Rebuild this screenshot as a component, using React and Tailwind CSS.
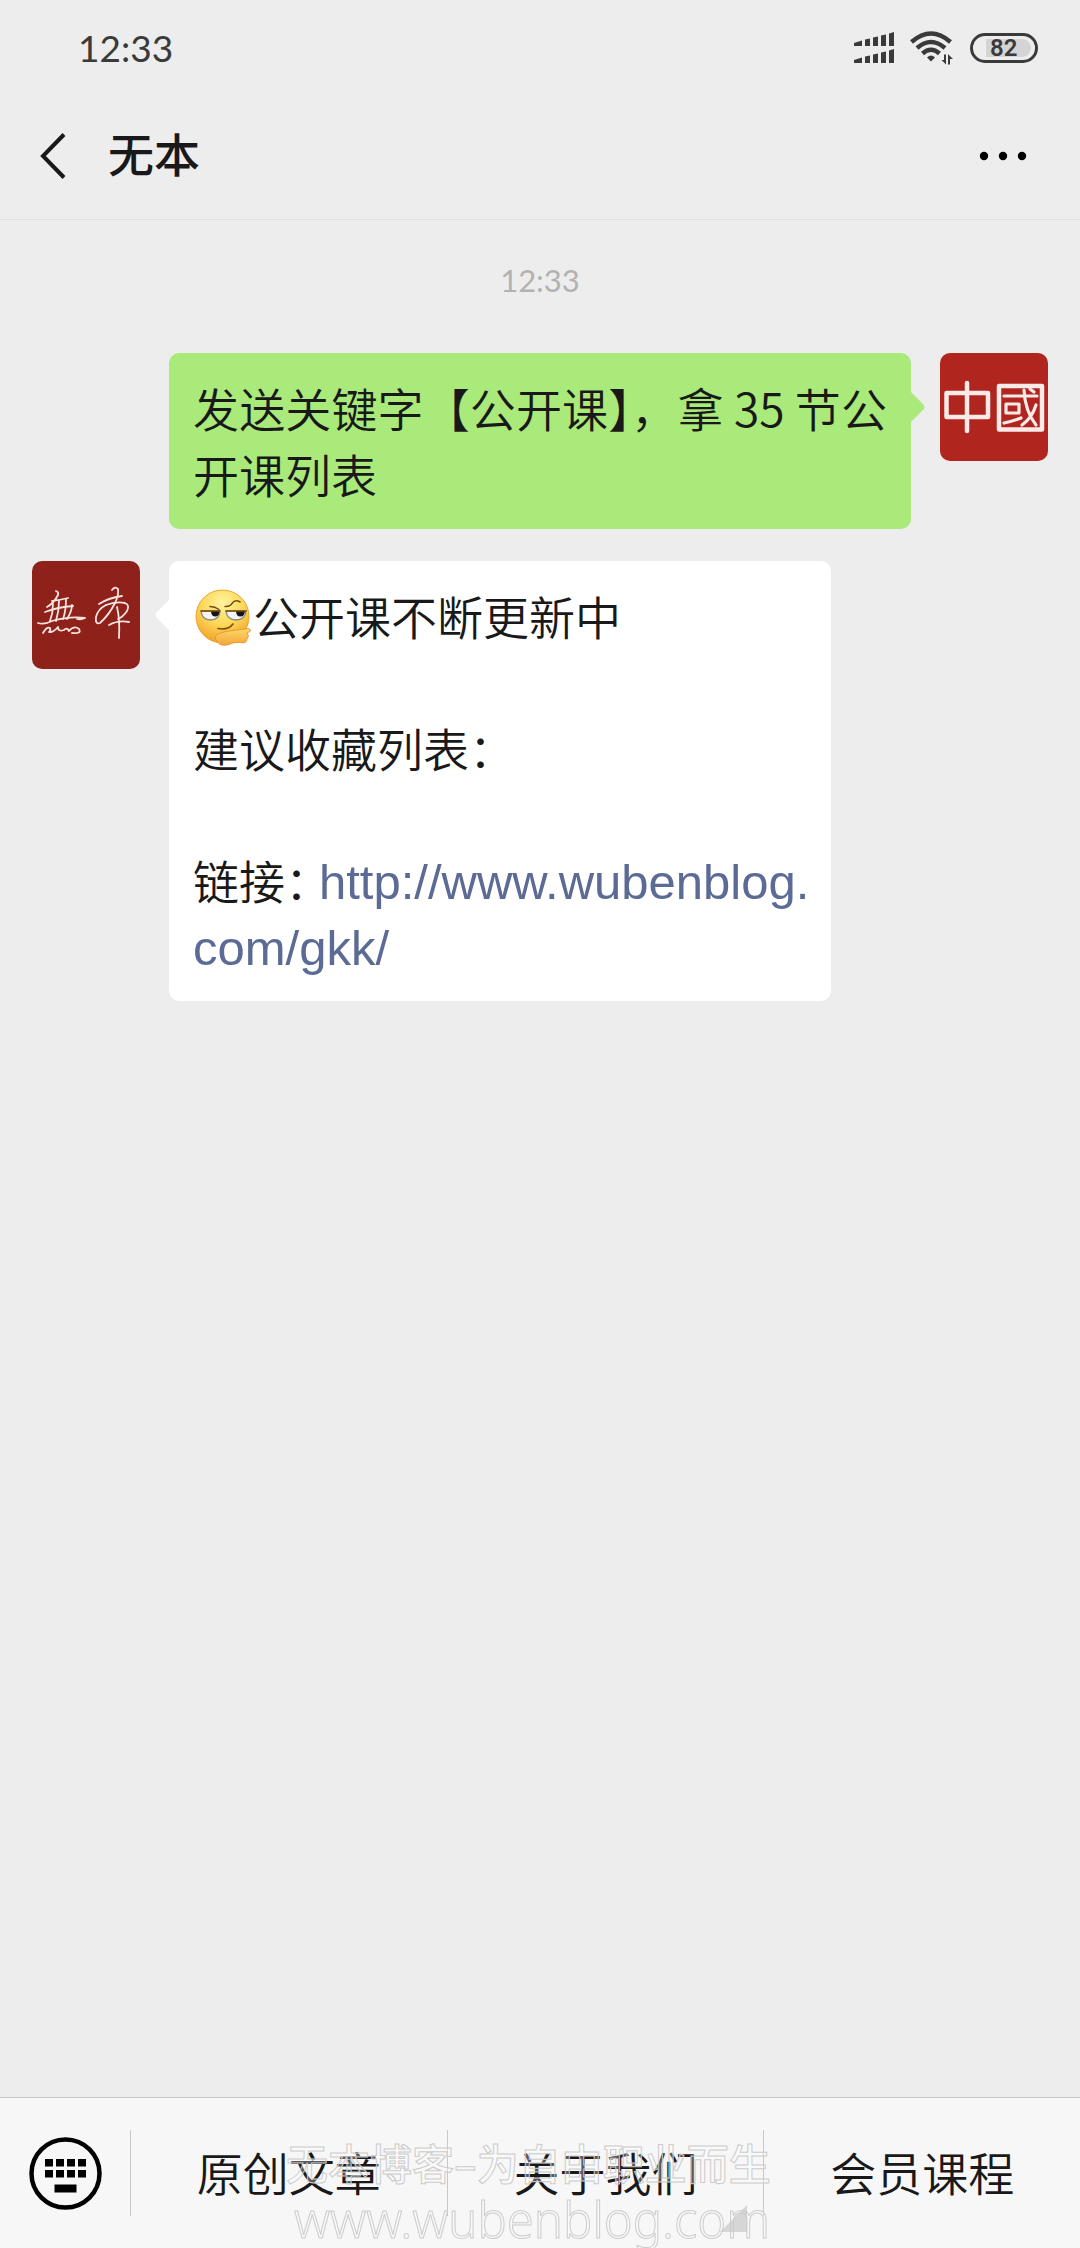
const CJK = 'font-["Noto_Sans_CJK_SC",sans-serif]';

function SignalIcon() {
  const rows = [0, 17];
  return (
    <svg width="40" height="32" viewBox="0 0 40 32" fill="#3a3a3a" aria-hidden="true">
      {rows.map((y) => (
        <g key={y} transform={`translate(0 ${y})`}>
          <path d="M0 11 L8 8.500 V14 H0Z" />
          <path d="M11 7.500 L16 6.500 V14 H11Z" />
          <path d="M19 5.500 L24 4.500 V14 H19Z" />
          <path d="M27 3.500 L32 2.500 V14 H27Z" />
          <path d="M35 1.500 L40 0 V14 H35Z" />
        </g>
      ))}
    </svg>
  );
}

function WifiIcon() {
  return (
    <svg width="44" height="34" viewBox="0 0 44 34" fill="none" stroke="#3a3a3a" strokeWidth="4.500" aria-hidden="true">
      <path d="M1.500 11 Q21 -6 40.500 11" />
      <path d="M7 17 Q21 5 35 17" />
      <path d="M12.500 22.500 Q21 15 29.500 22.500" />
      <path d="M17 26.500 Q21 22.500 25 26.500 L21 30.500Z" fill="#3a3a3a" stroke="none" />
      <path d="M36 23.500 V33.500 L31.500 29 H34 V23.500Z M38 33.500 V23 L43 28 H40 V33.500Z" fill="#3a3a3a" stroke="none" />
    </svg>
  );
}

function Battery() {
  return (
    <div className="flex h-[30px] w-[68px] items-center rounded-full border-3 border-[#3a3a3a] pr-1 pl-[13px]" aria-label="82%">
      <div className={'flex h-[18px] flex-1 items-center rounded-r-full bg-[#d4d4d4] pl-1 font-["Roboto",sans-serif] text-2xl leading-none font-semibold text-[#3a3a3a]'}>
        82
      </div>
    </div>
  );
}

function ThinkingFace() {
  return (
    <svg className="mt-1 inline-block" width="60" height="60" viewBox="0 0 60 60" role="img" aria-label="emoji">
      <defs>
        <radialGradient id="face" cx="0.5" cy="0.25" r="0.8">
          <stop offset="0" stopColor="#fff3a0" />
          <stop offset="0.5" stopColor="#fcd857" />
          <stop offset="1" stopColor="#ee9a25" />
        </radialGradient>
        <linearGradient id="hand" x1="0" y1="0" x2="0" y2="1">
          <stop offset="0" stopColor="#ffd768" />
          <stop offset="1" stopColor="#f3a63a" />
        </linearGradient>
      </defs>
      <circle cx="29.500" cy="29.500" r="26.500" fill="url(#face)" stroke="#e9a62e" strokeWidth="1" />
      <path d="M8 24 H27 Q26.500 33 17.500 33 Q9 33 8 24Z" fill="#f4f4f0" stroke="#8d8a7c" strokeWidth="1.400" />
      <path d="M33 24 H53 Q52 33 43 33 Q34 33 33 24Z" fill="#f4f4f0" stroke="#8d8a7c" strokeWidth="1.400" />
      <path d="M18 24 H26.500 Q26.500 29.500 22 29.500 Q18 29 18 24Z M43 24 H52 Q51.500 29.500 47.500 29.500 Q43 29.500 43 24Z" fill="#151515" />
      <g fill="none" stroke="#7a4a12" strokeLinecap="round">
        <path d="M8 24 H27 M33 24 H53" strokeWidth="1.500" />
        <path d="M17 19.500 Q22 19.500 26 22.500" strokeWidth="1.500" />
        <path d="M32 19.500 Q37 20 39 16.500 Q42 12 47 15" strokeWidth="1.500" />
        <path d="M25 41.500 Q35 43.500 40 37" strokeWidth="1.600" />
      </g>
      <path d="M25 47 Q32 44 40 43.500 L55 41.500 Q58.500 42 57 44.500 L54 46 Q57 49 54 52 Q54 57 47 55.500 Q40 55 36 57.500 Q27 60 24 54 Q20 50 25 47Z" fill="url(#hand)" stroke="#e18f26" strokeWidth="0.800" />
    </svg>
  );
}

function WubenAvatar() {
  return (
    <svg className="size-[108px] shrink-0 rounded-[10px] bg-[#8f211b]" viewBox="0 0 108 108" fill="none" stroke="#f7e3df" strokeWidth="1.800" strokeLinecap="round" strokeLinejoin="round" role="img" aria-label="無本">
      <path d="M24 30 Q27 31 26 34 Q22 42 15 46 M20 40 Q28 39 36 37" />
      <path d="M13 51 Q26 46 41 45 M6 62 Q12 64 20 60 Q38 55 53 57 Q49 59 45 58" />
      <path d="M21 43 Q21 52 18 60 M27 40 Q27 50 24 60 M34 38 Q34 50 31 58 M40 44 Q40 50 35 58" />
      <path d="M11 72 Q15 65 18 67 Q19 70 17 71 Q21 72 26 66 Q26 71 32 69 Q35 66 37 70 Q42 64 47 68 Q50 73 40 72" />
      <path d="M80 29 Q83 25 86 28 Q87 34 83 42 Q77 54 68 62 Q63 64 64 56 Q66 48 74 44 M67 43 Q76 37 90 35" />
      <path d="M74 44 Q84 40 93 42 Q98 44 95 50 Q91 56 86 58 M85 46 Q88 58 87 77 M77 64 Q86 59 97 61" />
    </svg>
  );
}

function ChinaAvatar() {
  return (
    <svg className="size-[108px] shrink-0 rounded-[10px] bg-[#b0261f]" viewBox="0 0 108 108" fill="none" stroke="#fbeae8" strokeWidth="4.500" strokeLinecap="round" strokeLinejoin="round" role="img" aria-label="中國">
      <path d="M6.500 40 H48 V64 H6.500Z M27 30 V78" />
      <path d="M59 33 H102 V76.500 H59Z" />
      <g strokeWidth="3.200">
        <path d="M64 43 H97 M66 51 H79 V60 H66Z M64 70 Q73 68 81 65" />
        <path d="M84 37 Q85 58 96 72 M96 52 Q92 65 82 72 M90 36 L94 39" />
      </g>
    </svg>
  );
}

function KeyboardIcon() {
  return (
    <svg width="73" height="73" viewBox="0 0 73 73" aria-hidden="true">
      <circle cx="36.500" cy="36.500" r="34" fill="none" stroke="#000" strokeWidth="4.500" />
      {[16, 27, 38, 49].map((x) => (
        <path key={x} d={`M${x} 22 h8 v7.500 h-8Z M${x} 33 h8 v7.500 h-8Z`} />
      ))}
      <path d="M25.500 47.500 h22 v8 h-22Z" />
    </svg>
  );
}

const menu = ['原创文章', '关于我们', '会员课程'];

export default function App() {
  return (
    <div className={`flex min-h-screen flex-col bg-[#ededed] text-[46px] leading-[66px] font-[350] text-[#191919] ${CJK}`}>
      <div className="flex h-24 items-center justify-between pr-[42px] pl-[78px]">
        <time className={'font-["Lato",sans-serif] text-[37px] font-normal text-[#3a3a3a]'}>12:33</time>
        <div className="flex items-center gap-4">
          <SignalIcon />
          <WifiIcon />
          <Battery />
        </div>
      </div>

      <header className="flex h-[124px] items-center border-b border-[#e0e0e0] pr-[52px] pb-1 pl-10">
        <button type="button" aria-label="返回">
          <svg width="26" height="46" viewBox="0 0 26 46" fill="none" stroke="#191919" strokeWidth="4">
            <path d="M24 1.500 L3 23 L24 44.500" />
          </svg>
        </button>
        <h1 className="ml-[42px] flex-1 pb-2 font-medium">无本</h1>
        <button type="button" aria-label="更多">
          <svg width="50" height="10" viewBox="0 0 50 10">
            <circle cx="6" cy="5" r="4.200" />
            <circle cx="25" cy="5" r="4.200" />
            <circle cx="44" cy="5" r="4.200" />
          </svg>
        </button>
      </header>

      <main className="flex flex-1 flex-col gap-8 px-8">
        <time className={'mt-[27px] block text-center font-["Lato",sans-serif] text-[31px] font-normal text-[#b2b2b2]'}>12:33</time>

        <div className="mt-2 flex items-start gap-[29px] pl-[137px]">
          <p className="relative flex-1 rounded-[10px] bg-[#a9ea7a] px-6 pt-[21px] pb-[23px] text-justify">
            发送关键字【公开课】，拿 35 节公开课列表
            <svg className="absolute top-[39px] left-full" width="14" height="30" viewBox="0 0 14 30" fill="#a9ea7a" aria-hidden="true">
              <path d="M0 0 L12 12 Q15 15 12 18 L0 30Z" />
            </svg>
          </p>
          <ChinaAvatar />
        </div>

        <div className="flex items-start gap-[29px]">
          <WubenAvatar />
          <div className="relative max-w-[662px] rounded-[10px] bg-white pt-[21px] pr-4 pb-[23px] pl-6">
            <svg className="absolute top-[39px] right-full" width="14" height="30" viewBox="0 0 14 30" fill="#fff" aria-hidden="true">
              <path d="M14 0 L2 12 Q-1 15 2 18 L14 30Z" />
            </svg>
            <p className="flex h-[66px] items-center"><ThinkingFace />公开课不断更新中</p>
            <p className="mt-[66px]">建议收藏列表：</p>
            <p className="mt-[66px]">
              链接<span className="inline-block w-[34px]">：</span>
              <a href="http://www.wubenblog.com/gkk/" className={'font-["Liberation_Sans",sans-serif] text-[49px] leading-none text-[#5b6b95]'}>
                http://www.wubenblog.<wbr />com/gkk/
              </a>
            </p>
          </div>
        </div>
      </main>

      <nav className="relative flex h-[151px] items-center border-t border-[#c8c8c8] bg-[#f7f7f7]">
        <button type="button" aria-label="键盘" className="flex w-[130px] justify-center">
          <KeyboardIcon />
        </button>
        {menu.map((label) => (
          <button key={label} type="button" className="h-[86px] flex-1 border-l border-[#c8c8c8] pb-1">
            {label}
          </button>
        ))}
        <div className="pointer-events-none absolute top-[34px] left-[286px] whitespace-nowrap text-white/30">
          <div className="text-[42px] leading-[60px] font-medium [-webkit-text-stroke:1px_#cccccc]">无本博客–为自由职业而生</div>
          <div className={'pl-2 font-["Noto_Sans",sans-serif] text-[49px] leading-[54px] font-light [-webkit-text-stroke:1px_#cccccc]'}>www.wubenblog.com</div>
        </div>
        <svg className="pointer-events-none absolute top-[107px] left-[720px]" width="27" height="27" viewBox="0 0 27 27" fill="#c8c8c8" fillOpacity="0.700" aria-hidden="true">
          <path d="M0 27 L27 0 V27Z" />
        </svg>
      </nav>
    </div>
  );
}
